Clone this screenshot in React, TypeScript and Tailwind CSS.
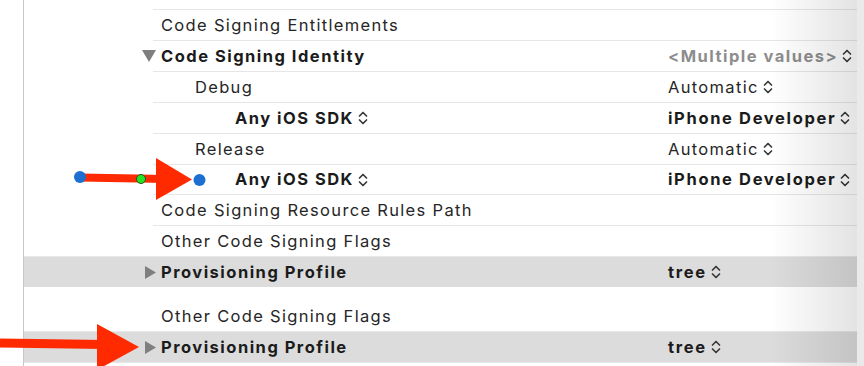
import React from 'react';

type Row = {
  label: string;
  indent?: number;
  bold?: boolean;
  caret?: 'down' | 'right';
  value?: string;
  valueBold?: boolean;
  valueMuted?: boolean;
  labelStepper?: boolean;
  grey?: boolean;
};

function Stepper({ className = '' }: { className?: string }) {
  return (
    <svg width="10" height="14" viewBox="0 0 10 14" className={className} fill="none" stroke="currentColor" strokeWidth="1.7" strokeLinecap="round" strokeLinejoin="round">
      <path d="M1.5 5 L5 1.5 L8.5 5" />
      <path d="M1.5 9 L5 12.5 L8.5 9" />
    </svg>
  );
}

function Caret({ dir }: { dir: 'down' | 'right' }) {
  if (dir === 'down') {
    return (
      <svg width="14" height="12" viewBox="0 0 14 12" className="shrink-0">
        <path d="M0 0 H14 L7 12 Z" fill="#7f7f7f" />
      </svg>
    );
  }
  return (
    <svg width="11" height="13" viewBox="0 0 11 13" className="shrink-0">
      <path d="M0 0 L11 6.5 L0 13 Z" fill="#7f7f7f" />
    </svg>
  );
}

function SettingRow({ row, h = 'h-[31px]' }: { row: Row; h?: string }) {
  const labelCls = row.bold ? 'font-bold text-[#1b1b1b] tracking-[0.09em]' : 'text-[#262626]';
  const valueCls = row.valueMuted
    ? 'font-bold text-[#8d8d8d] tracking-[0.09em]'
    : row.valueBold
      ? 'font-bold text-[#1b1b1b] tracking-[0.1em]'
      : 'text-[#262626]';
  return (
    <div className={`${h} flex items-center ${row.grey ? 'bg-[#dcdcdc] border-t border-[#e8e8e8]' : ''}`}>
      <div className="w-[644px] h-full flex items-center">
        <div className="w-[137px] h-full flex items-center justify-end pr-[5px]">
          {row.caret && <Caret dir={row.caret} />}
        </div>
        <div
          className={`flex-1 h-full flex items-center ${row.grey ? '' : 'border-t border-[#e6e6e6]'} -ml-[8px] pl-[8px]`}
        >
          <span className={`${labelCls} flex items-center gap-[4px]`} style={{ marginLeft: row.indent ?? 0 }}>
            {row.label}
            {row.labelStepper && <Stepper className="text-[#3a3a3a]" />}
          </span>
        </div>
      </div>
      <div className={`flex-1 h-full flex items-center ${row.grey ? '' : 'border-t border-[#e6e6e6]'}`}>
        {row.value && (
          <span className={`${valueCls} flex items-center gap-[4px]`}>
            {row.value}
            <Stepper className={row.valueMuted ? 'text-[#3c3c3c]' : 'text-[#3a3a3a]'} />
          </span>
        )}
      </div>
    </div>
  );
}

const rows: Row[] = [
  { label: 'Code Signing Entitlements' },
  { label: 'Code Signing Identity', bold: true, caret: 'down', value: '<Multiple values>', valueMuted: true },
  { label: 'Debug', indent: 34, value: 'Automatic' },
  { label: 'Any iOS SDK', indent: 74, bold: true, labelStepper: true, value: 'iPhone Developer', valueBold: true },
  { label: 'Release', indent: 34, value: 'Automatic' },
  { label: 'Any iOS SDK', indent: 74, bold: true, labelStepper: true, value: 'iPhone Developer', valueBold: true },
  { label: 'Code Signing Resource Rules Path' },
  { label: 'Other Code Signing Flags' },
];

const provisioning: Row = {
  label: 'Provisioning Profile',
  bold: true,
  caret: 'right',
  value: 'tree',
  valueBold: true,
  grey: true,
};

export default function App() {
  return (
    <div
      className="relative w-[864px] h-[366px] overflow-hidden bg-white flex text-[16.5px] leading-none tracking-[0.08em]"
      style={{ fontFamily: 'Inter, "Noto Sans", "Liberation Sans", sans-serif' }}
    >
      <div className="w-[23px] shrink-0" />
      <div className="w-px shrink-0 bg-[#c8c8c8]" />
      <div className="flex-1 flex flex-col">
        <div className="h-[9px] shrink-0" />
        {rows.map((r, i) => (
          <SettingRow key={i} row={r} h={i === 5 ? 'h-[30px]' : 'h-[31px]'} />
        ))}
        <SettingRow row={provisioning} h="h-[31px]" />
        <div className="h-[14px] shrink-0" />
        <div className="h-[30px] flex items-center pl-[137px]">
          <span className="text-[#262626]">Other Code Signing Flags</span>
        </div>
        <SettingRow row={provisioning} h="h-[31px]" />
        <div className="border-t border-[#e8e8e8]" />
      </div>
      <div className="w-[7px] shrink-0 bg-[#eaeaea]" />

      {/* shading toward the right edge */}
      <div className="absolute top-0 bottom-0 left-[770px] w-[87px] pointer-events-none bg-gradient-to-r from-transparent to-black/[0.11]" />

      {/* annotation arrows */}
      <svg className="absolute inset-0 pointer-events-none" width="864" height="366" viewBox="0 0 864 366">
        <line x1="80" y1="177.5" x2="166" y2="179" stroke="#ff2a00" strokeWidth="8" />
        <polygon points="156,158 192,179.5 156,200" fill="#ff2a00" />
        <circle cx="80" cy="177" r="6" fill="#1d6fd2" />
        <circle cx="199.5" cy="180" r="6" fill="#1d6fd2" />
        <circle cx="141" cy="179" r="4.5" fill="#27e327" stroke="#1d5a1d" strokeWidth="1" />

        <line x1="0" y1="343" x2="104" y2="344.5" stroke="#ff2a00" strokeWidth="9" />
        <polygon points="97,324 139,347 97,370" fill="#ff2a00" />
      </svg>
    </div>
  );
}
